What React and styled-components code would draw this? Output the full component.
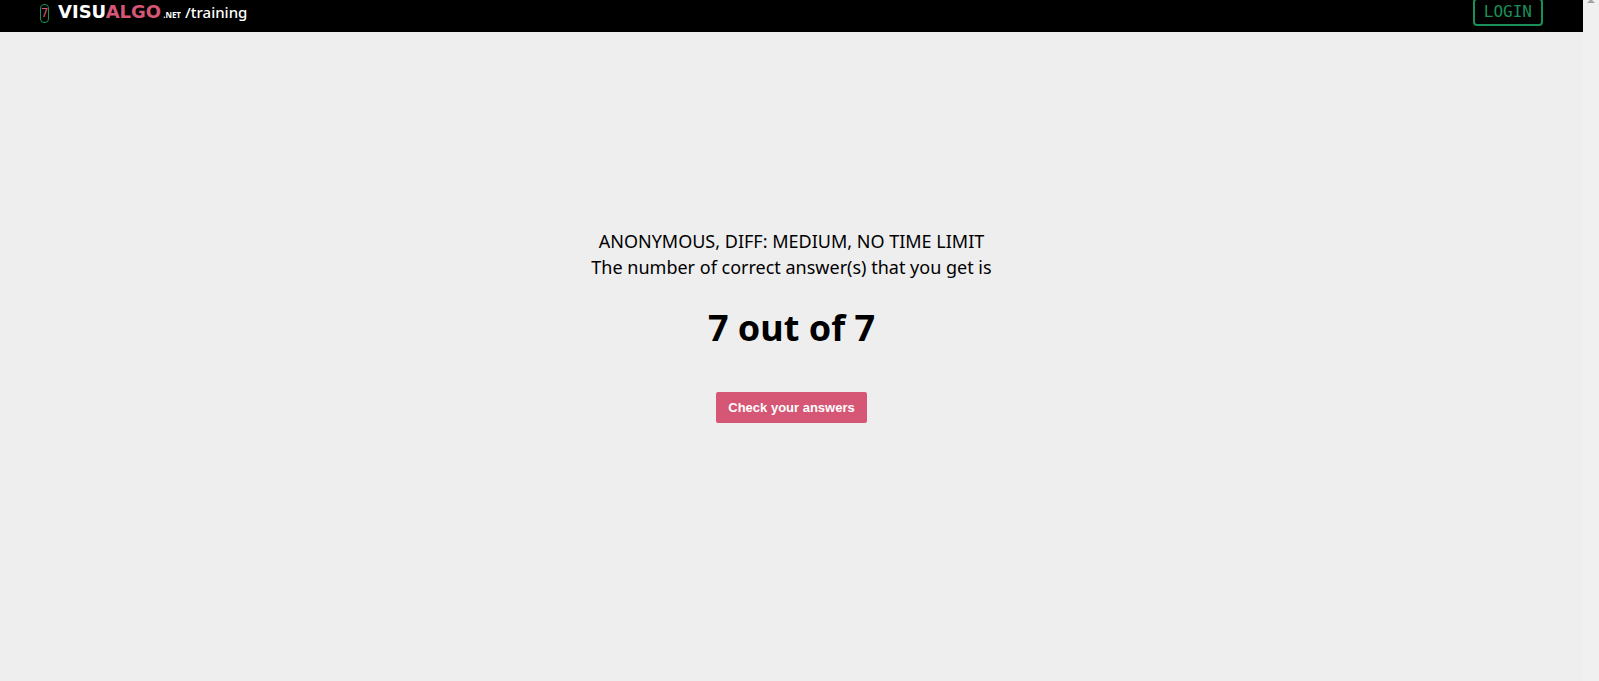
import React from 'react';
import styled, { createGlobalStyle } from 'styled-components';

const GlobalStyle = createGlobalStyle`
  * { box-sizing: border-box; }
  body {
    margin: 0;
    background: #eeeeee;
    color: #000;
    font-family: "Noto Sans", sans-serif;
  }
`;

const Shell = styled.div`
  display: flex;
  min-height: 100vh;
`;

const Page = styled.div`
  flex: 1;
  display: flex;
  flex-direction: column;
`;

const TopBar = styled.header`
  display: flex;
  justify-content: space-between;
  align-items: flex-start;
  height: 32px;
  padding: 0 40px;
  background: #000;
  overflow: hidden;
`;

const Brand = styled.nav`
  display: flex;
  align-items: baseline;
  line-height: 24px;
  color: #fff;
`;

const Version = styled.a`
  display: flex;
  justify-content: center;
  align-self: flex-start;
  width: 9px;
  height: 19px;
  margin: 4px 9px 0 0;
  border: 1px solid #1a9058;
  border-radius: 4px;
  color: #d65775;
  font: 12px/17px "DejaVu Sans", sans-serif;
  text-decoration: none;
`;

const Logo = styled.a`
  color: #fff;
  font-family: "DejaVu Sans", sans-serif;
  font-size: 18px;
  font-weight: 700;
  text-decoration: none;
`;

const Accent = styled.span`
  color: #d65775;
`;

const Domain = styled.span`
  margin-left: 2px;
  font-size: 8px;
  font-weight: 700;
`;

const Section = styled.a`
  margin-left: 4px;
  color: #fff;
  font-size: 15px;
  font-weight: 500;
  text-decoration: none;
`;

const LoginButton = styled.button`
  height: 28px;
  margin-top: -2px;
  padding: 0 9px;
  border: 2px solid #1a9058;
  border-radius: 4px;
  background: transparent;
  color: #1a9058;
  font: 16px/24px "DejaVu Sans Mono", monospace;
`;

const Result = styled.main`
  display: flex;
  flex-direction: column;
  align-items: center;
  padding: 196px 16px 32px;
  text-align: center;
`;

const Summary = styled.p`
  margin: 0;
  font-size: 18px;
  line-height: 26px;
`;

const Score = styled.h1`
  margin: 20px 0 36px;
  font-size: 36px;
  font-weight: 700;
  line-height: 56px;
`;

const CheckButton = styled.button`
  height: 31px;
  padding: 0 12px;
  border: 0;
  border-radius: 2px;
  background: #d65775;
  color: #fff;
  font: 700 13px/31px "Liberation Sans", Arial, sans-serif;
`;

const ScrollTrack = styled.div`
  width: 16px;
  background: #f0f0f0;
  display: flex;
  justify-content: center;
  align-items: flex-start;
`;

export default function App() {
  return (
    <Shell>
      <GlobalStyle />
      <Page>
        <TopBar>
          <Brand aria-label="Site">
            <Version href="#">7</Version>
            <Logo href="#">VISU<Accent>ALGO</Accent></Logo>
            <Domain>.NET</Domain>
            <Section href="#">/training</Section>
          </Brand>
          <LoginButton type="button">LOGIN</LoginButton>
        </TopBar>
        <Result>
          <Summary>ANONYMOUS, DIFF: MEDIUM, NO TIME LIMIT</Summary>
          <Summary>The number of correct answer(s) that you get is</Summary>
          <Score>7 out of 7</Score>
          <CheckButton type="button">Check your answers</CheckButton>
        </Result>
      </Page>
      <ScrollTrack aria-hidden="true">
        <svg width="8" height="3" viewBox="0 0 8 3">
          <path d="M3 0H5L8 3H0Z" fill="#a3a3a3" />
        </svg>
      </ScrollTrack>
    </Shell>
  );
}
